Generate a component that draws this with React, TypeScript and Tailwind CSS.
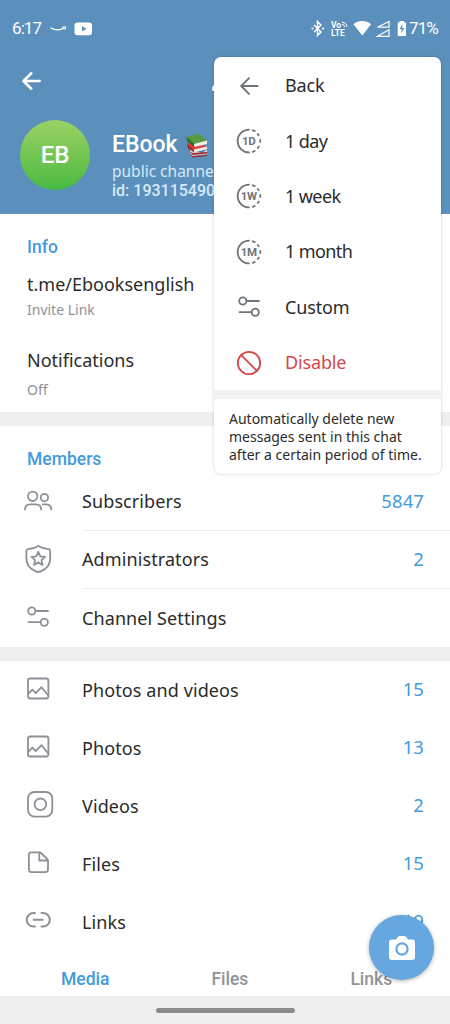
import type { FC, ReactNode } from 'react';
import clsx from 'clsx';

interface IconProps {
  className?: string;
}

interface SvgProps extends IconProps {
  children: ReactNode;
  strokeWidth?: number;
}

const Svg: FC<SvgProps> = ({ children, className, strokeWidth = 1.8 }) => (
  <svg
    width="28"
    height="28"
    viewBox="0 0 28 28"
    fill="none"
    stroke="currentColor"
    strokeWidth={strokeWidth}
    strokeLinecap="round"
    strokeLinejoin="round"
    className={clsx('shrink-0 overflow-visible', className)}
  >
    {children}
  </svg>
);

const SlidersIcon: FC<IconProps> = ({ className }) => (
  <Svg className={className}>
    <circle cx="7.8" cy="8" r="3.6" />
    <path d="M11.6 8H24M4.5 19.2h12" />
    <circle cx="20.3" cy="19.2" r="3.6" />
  </Svg>
);

const ImageIcon: FC<IconProps> = ({ className }) => (
  <Svg className={className}>
    <rect x="4" y="3.5" width="20.4" height="20" rx="2.2" />
    <path d="M4.5 18.7l3.9-4 3.3 3.5 5.8-6 6.5 8" />
  </Svg>
);

const UsersIcon: FC<IconProps> = () => (
  <Svg>
    <circle cx="8.7" cy="9.3" r="4.7" />
    <path d="M1 22.6c0-3.5 2-5.3 5.2-5.3h5.5c3.2 0 5.5 1.8 5.5 5.3" />
    <circle cx="20.4" cy="10.6" r="3.7" />
    <path d="M18.8 17.3H22c3 0 5.3 1.8 5.3 5.3" />
  </Svg>
);

const ShieldIcon: FC<IconProps> = () => (
  <Svg>
    <path d="M14.3.9c3.2 2 6.9 3 10.3 3.2 1 .1 1.6.8 1.6 1.8v7.6c0 6.4-4.2 10.7-9.5 12.9-1.7.7-3.1.7-4.8 0C6.6 24.2 2.4 19.9 2.4 13.5V5.9c0-1 .6-1.7 1.6-1.8C7.4 3.9 11.1 2.9 14.3.9z" />
    <path d="M14.3 6.8l2 4.5 4.8.5-3.6 3.3 1.1 4.8-4.3-2.5-4.3 2.5 1.1-4.8-3.6-3.3 4.8-.5z" />
  </Svg>
);

const VideoIcon: FC<IconProps> = () => (
  <Svg>
    <rect x="4" y="1" width="24.3" height="24.6" rx="6.5" />
    <circle cx="16.4" cy="13.3" r="5.8" />
  </Svg>
);

const FileIcon: FC<IconProps> = () => (
  <Svg>
    <path d="M7.4 3.3h7.9c.6 0 1.2.2 1.7.7l6.2 6c.5.5.8 1.1.8 1.8v8.8c0 1.5-1 2.5-2.5 2.5H7.4c-1.5 0-2.5-1-2.5-2.5V5.8c0-1.5 1-2.5 2.5-2.5z" />
    <path d="M15.3 3.5v8h8.4" />
  </Svg>
);

const LinkIcon: FC<IconProps> = () => (
  <Svg strokeWidth={2}>
    <path d="M11 6H9.5a6.8 6.8 0 000 13.6H11M17.5 6H19a6.8 6.8 0 010 13.6h-1.5M9.7 12.8h9" />
  </Svg>
);

const TimerIcon: FC<{ label: string }> = ({ label }) => (
  <Svg className="text-[#6f757b]">
    <path d="M14 2.6a11.4 11.4 0 000 22.8" />
    <path d="M17.7 3.2l2 .9M22.8 6.9l.9 1.3M25.3 12.8v2.1M23.8 19.6l-1 1.4M19.7 24l-1.900.8" />
    <text
      x="13.7"
      y="18"
      textAnchor="middle"
      fill="currentColor"
      stroke="none"
      className="font-['Roboto',sans-serif] text-[11.5px] font-bold tracking-[-0.3px]"
    >
      {label}
    </text>
  </Svg>
);

const BlockIcon: FC<IconProps> = () => (
  <Svg>
    <circle cx="14" cy="14" r="11.2" />
    <path d="M6.2 6.2l15.7 15.7" />
  </Svg>
);

const BackIcon: FC<IconProps> = ({ className }) => (
  <Svg className={className} strokeWidth={1.9}>
    <path d="M22.6 14H6M14 6.2L6.2 14l7.8 7.9" />
  </Svg>
);

const BooksIcon: FC<IconProps> = () => (
  <svg width="24" height="25" viewBox="0 0 24 25" className="shrink-0">
    <path d="M3 13l12-3 7 7-13 4-6-5z" fill="#3a6fae" />
    <path d="M5 17l12 3 5-3v4L8 23l-3-3z" fill="#e8e4df" />
    <path d="M4 18l4 2 14-1v1.5L8 22zM5 21l3 2 14-1v1L8 24.5z" fill="#9d2730" />
    <path d="M2 10l11-1 9 5-13 3-7-4z" fill="#dd3d3e" />
    <path d="M8.5 16.5L22 13.5v3l-13 3z" fill="#e9e6e1" />
    <path d="M2 11l7 6v2.5L3 15z" fill="#a92431" />
    <path d="M1.5 4L14 .5 22.5 8 9 12 1.5 6z" fill="#559b42" />
    <path d="M9 11l13-3.5V11L9.5 14z" fill="#edf0e8" />
    <path d="M1.5 4L9 10.5V14L2 8z" fill="#2f6d2b" />
  </svg>
);

const StatusIcons = () => (
  <svg width="100" height="24" viewBox="310 16 100 24" fill="white" className="shrink-0">
    <path
      d="M314 24l7 7-3.500 3.500V20.500L321 24l-7 7"
      fill="none"
      stroke="white"
      strokeWidth="1.5"
    />
    <circle cx="312.5" cy="27.5" r="1.1" />
    <circle cx="323" cy="27.5" r="1.1" />
    <text x="331" y="26.5" className="font-['Roboto',sans-serif] text-[8.5px] font-bold">
      Vo
    </text>
    <text x="331" y="35" className="font-['Roboto',sans-serif] text-[8.5px] font-bold">
      LTE
    </text>
    <path
      d="M342 23.500c1.800 0 2.500 1 2.500 2.500M342 21.300c3.200 0 5 1.800 5 4.700"
      fill="none"
      stroke="white"
    />
    <path d="M353.5 23.2c5-4.2 12.5-4.2 17.5 0l-8.7 11.3z" />
    <path
      d="M377.5 26.200l11.500-5.700v5.700zM377.5 35.300l11.500-6.500v6.500z"
      fill="none"
      stroke="white"
      strokeWidth="1.2"
    />
    <path d="M399.5 20h4.500v1.500h2v13.500h-8.300V21.500h1.800z" />
    <path d="M402.5 23l-3 5h2.300l-.5 4.500 3.200-5.500h-2.300z" fill="#5b8fbc" />
  </svg>
);

const StatusBar = () => (
  <div className="flex h-14 items-center px-3 pt-px font-['Roboto',sans-serif] text-white">
    <span className="w-[37px] text-[17px] tracking-[-0.9px]">6:17</span>
    <svg width="45" height="16" viewBox="0 0 45 16" fill="white">
      <path
        d="M1.5 6.7c4.5 2.6 9.5 2.6 13.5.4M13.5 6h3l-.7 2.5"
        fill="none"
        stroke="white"
        strokeWidth="1.2"
      />
      <rect x="25.5" y="1.5" width="17.5" height="12.8" rx="3" />
      <path d="M33 5v5.5l4.5-2.7z" fill="#5b8fbc" />
    </svg>
    <div className="ml-auto flex items-center">
      <StatusIcons />
      <span className="-ml-px w-[29px] text-[17px] tracking-[-0.9px]">71%</span>
    </div>
  </div>
);

const Header = () => (
  <header className="h-[214px] shrink-0 overflow-hidden bg-[#5b8fbc]">
    <StatusBar />
    <div className="flex h-12 items-center justify-between pl-[17px] pr-[213px] pt-px text-white">
      <Svg strokeWidth={2.6}>
        <path d="M22.6 14H6.5M14.3 6.3L6.5 14l7.8 7.7" />
      </Svg>
      <svg width="26" height="26" viewBox="0 0 24 24" fill="white" className="shrink-0">
        <path d="M1 20c0-2 .3-3 1.5-4.2L14 4l5 5L7.5 20.3C6 21.5 3 21.5 1 21z" />
      </svg>
    </div>
    <div className="flex items-start pl-5 pt-4">
      <div className="flex size-[70px] shrink-0 items-center justify-center rounded-full bg-linear-to-b from-[#9ad164] to-[#46ba43] font-['Roboto',sans-serif] text-[24px] font-medium text-white">
        EB
      </div>
      <div className="ml-[22px] whitespace-nowrap pt-2.5 text-[#d7eafa]">
        <div className="flex h-[30px] items-center gap-[7px] font-['Roboto',sans-serif] text-[23px] font-medium text-white">
          EBook
          <BooksIcon />
        </div>
        <div className="mt-px text-[15.5px] leading-5">public channel</div>
        <div className="font-['Roboto',sans-serif] text-[16px] font-medium leading-5">
          id: 1931154902
        </div>
      </div>
    </div>
  </header>
);

const Heading: FC<{ children: ReactNode }> = ({ children }) => (
  <h2 className="font-['Roboto',sans-serif] text-[17.5px] font-medium leading-6 text-[#429bdb]">
    {children}
  </h2>
);

interface RowProps {
  icon: ReactNode;
  label: string;
  count?: string;
  divider?: boolean;
}

const Row: FC<RowProps> = ({ icon, label, count, divider }) => (
  <div className="flex h-[58px] items-stretch pl-6">
    <div className="flex w-[58px] items-center pb-0.5 text-[#8b9197]">{icon}</div>
    <div
      className={clsx(
        'flex flex-1 items-center justify-between pr-[26px] text-[18px] tracking-[0.1px]',
        divider && 'border-b border-[#ededed]',
      )}
    >
      <span>{label}</span>
      {count && <span className="pb-0.5 text-[18.5px] text-[#429bdb]">{count}</span>}
    </div>
  </div>
);

interface MenuItemProps {
  icon: ReactNode;
  label: string;
  danger?: boolean;
}

const MenuItem: FC<MenuItemProps> = ({ icon, label, danger }) => (
  <li
    className={clsx(
      'flex h-[55.4px] items-center gap-[22px] pl-[21px] text-[18px]',
      danger ? 'text-[#d34848]' : 'text-[#2b2b2b]',
      label.startsWith('1') ? 'tracking-[-0.6px]' : 'tracking-[-0.15px]',
    )}
  >
    {icon}
    {label}
  </li>
);

const AutoDeleteMenu = () => (
  <div className="absolute left-[214px] top-[57px] h-[417px] w-[227px] overflow-hidden rounded-[7px] bg-white shadow-[0_0_3px_rgba(0,0,0,0.22)]">
    <ul className="pt-px">
      <MenuItem icon={<BackIcon className="text-[#6f757b]" />} label="Back" />
      <MenuItem icon={<TimerIcon label="1D" />} label="1 day" />
      <MenuItem icon={<TimerIcon label="1W" />} label="1 week" />
      <MenuItem icon={<TimerIcon label="1M" />} label="1 month" />
      <MenuItem icon={<SlidersIcon className="text-[#6f757b]" />} label="Custom" />
      <MenuItem icon={<BlockIcon />} label="Disable" danger />
    </ul>
    <div className="h-[9px] bg-[#f3f3f3]" />
    <p className="whitespace-nowrap pl-[15px] pt-[11px] text-[14px] leading-[18px]">
      Automatically delete new
      <br />
      messages sent in this chat
      <br />
      after a certain period of time.
    </p>
  </div>
);

export default function App() {
  return (
    <div className="relative flex h-[1024px] w-[450px] flex-col overflow-hidden bg-[#efefef] font-['Noto_Sans',sans-serif] text-[#2b2b2b]">
      <Header />
      <section className="h-[198px] shrink-0 bg-white pl-[27px] pt-[21px]">
        <Heading>Info</Heading>
        <div className="mt-3 text-[18px] leading-[26px]">t.me/Ebooksenglish</div>
        <div className="mt-[3px] text-[14px] leading-5 text-[#8f9296]">Invite Link</div>
        <div className="mt-[27px] text-[18px] leading-[26px]">Notifications</div>
        <div className="mt-[7px] text-[14px] leading-5 text-[#8f9296]">Off</div>
      </section>
      <section className="mt-3.5 h-[221px] shrink-0 bg-white">
        <div className="h-[47px] pl-[27px] pt-[21px]">
          <Heading>Members</Heading>
        </div>
        <Row icon={<UsersIcon />} label="Subscribers" count="5847" divider />
        <Row icon={<ShieldIcon />} label="Administrators" count="2" divider />
        <Row icon={<SlidersIcon />} label="Channel Settings" />
      </section>
      <section className="mt-3.5 h-[335px] shrink-0 bg-white">
        <Row icon={<ImageIcon />} label="Photos and videos" count="15" />
        <Row icon={<ImageIcon />} label="Photos" count="13" />
        <Row icon={<VideoIcon />} label="Videos" count="2" />
        <Row icon={<FileIcon />} label="Files" count="15" />
        <Row icon={<LinkIcon />} label="Links" count="19" />
        <nav className="flex gap-[102px] pl-[61px] pt-4 font-['Roboto',sans-serif] text-[17.5px] font-medium leading-6 text-[#8f9296]">
          <span className="text-[#429bdb]">Media</span>
          <span>Files</span>
          <span>Links</span>
        </nav>
      </section>
      <div className="flex h-7 items-center justify-center">
        <div className="h-[5px] w-[139px] rounded-full bg-[#8a8a8a]" />
      </div>
      <AutoDeleteMenu />
      <button
        type="button"
        className="absolute left-[369px] top-[915px] flex size-[65px] items-center justify-center rounded-full bg-[#66a7e0] shadow-[0_1px_4px_rgba(0,0,0,0.3)]"
      >
        <svg width="28" height="26" viewBox="0 0 28 26" fill="white">
          <path d="M4 4.500h4L9.800 2C10.300 1.300 11 1 11.800 1h4.400c.8 0 1.500.3 2 1L20 4.500h4c2 0 3 1 3 3V22c0 2-1 3-3 3H4c-2 0-3-1-3-3V7.500c0-2 1-3 3-3z" />
          <circle cx="14" cy="14" r="5.6" stroke="#66a7e0" strokeWidth="2.2" />
        </svg>
      </button>
    </div>
  );
}
